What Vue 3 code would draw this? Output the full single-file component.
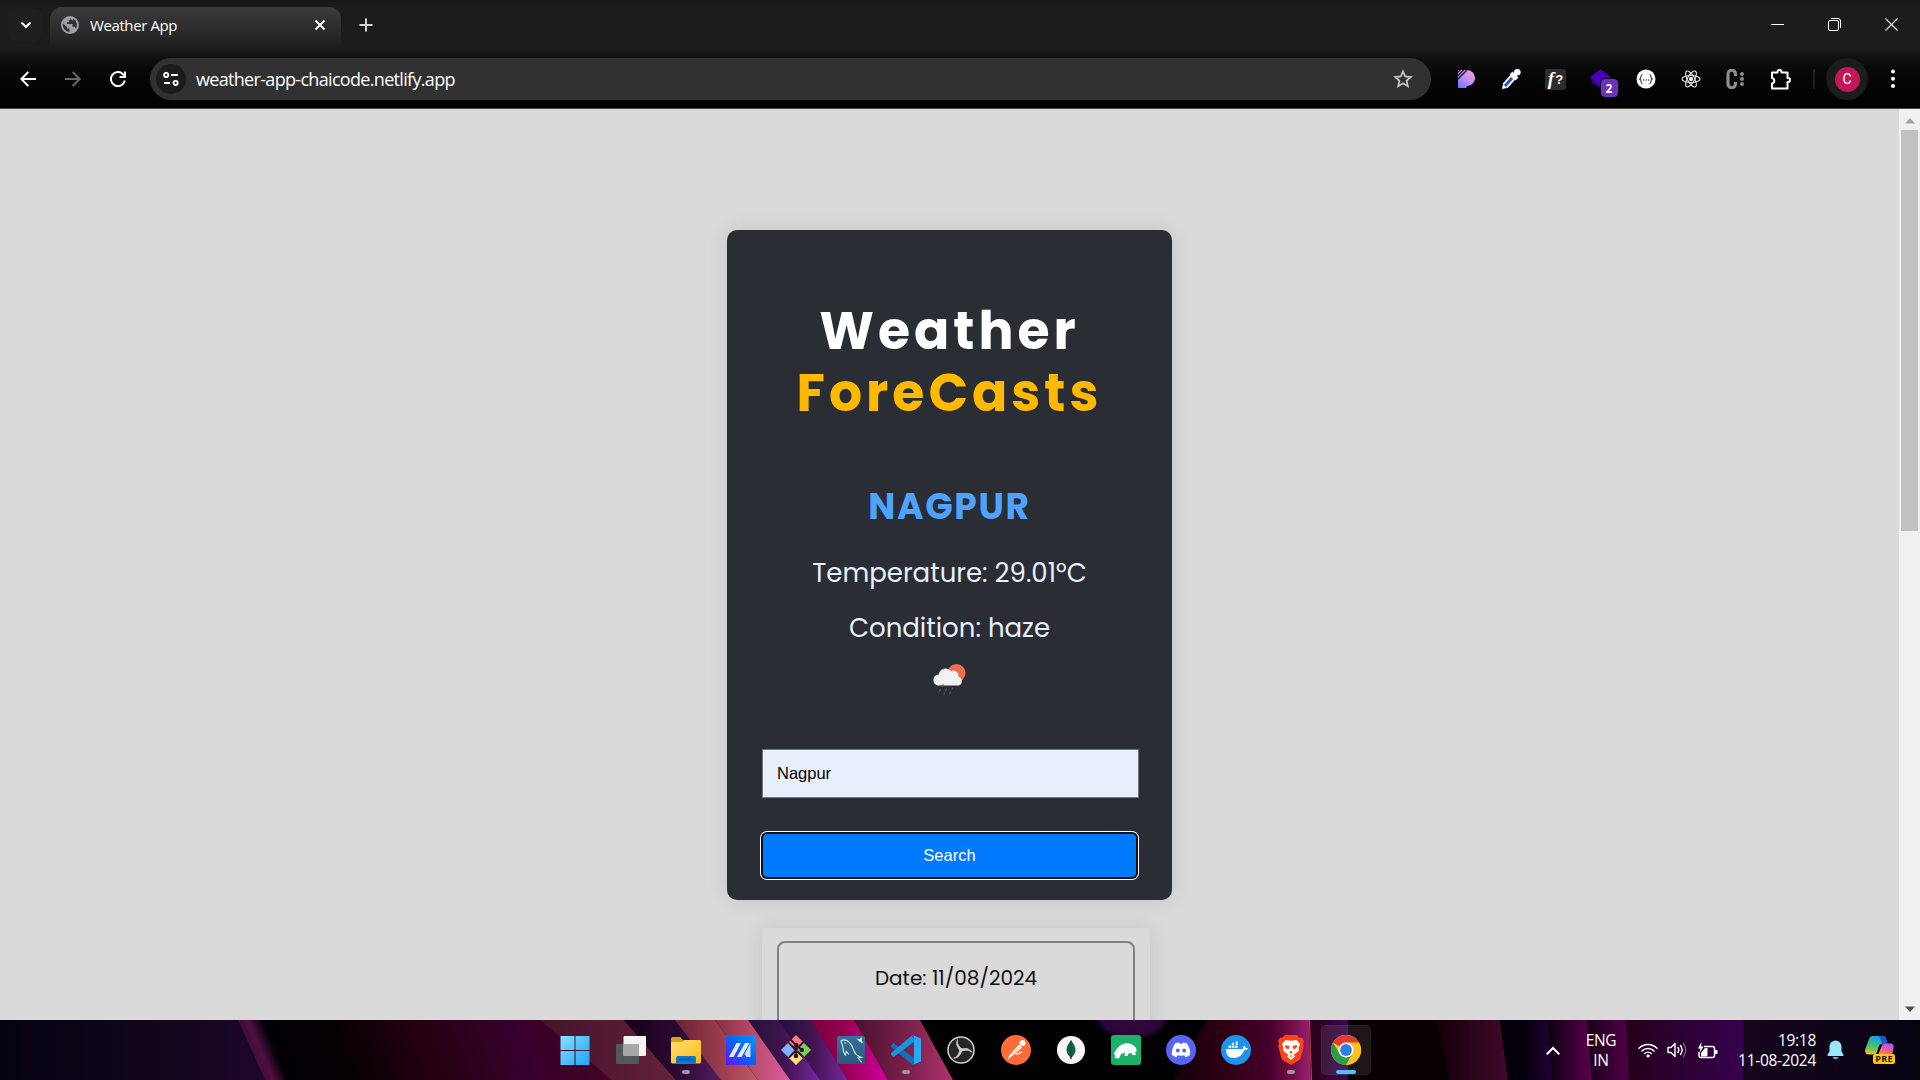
<script setup>
const extensions = ['pixel', 'picker', 'fonts', 'stack', 'json', 'react', 'cdots', 'puzzle']
const apps = [
  { id: 'windows' }, { id: 'taskview' }, { id: 'explorer', open: true }, { id: 'asus' }, { id: 'git' },
  { id: 'mysql' }, { id: 'vscode', open: true }, { id: 'obs' }, { id: 'postman' }, { id: 'mongo' },
  { id: 'bear' }, { id: 'discord' }, { id: 'docker' }, { id: 'brave', open: true }, { id: 'chrome', active: true },
]
</script>

<template>
  <div class="screen">
    <header class="browser">
      <div class="tabstrip">
        <div class="tabsearch">
          <svg width="12" height="8" viewBox="0 0 12 8"><path d="M1.500 1.500 6 6l4.500-4.500" fill="none" stroke="#fff" stroke-width="2.200" /></svg>
        </div>
        <div class="tab">
          <svg class="globe" width="18" height="18" viewBox="0 0 18 18">
            <circle cx="9" cy="9" r="9" fill="#9aa0a6" />
            <path d="M2 7.500 6 11v1.500h2.500V16A7.200 7.200 0 0 1 2 7.500zM9.500 2v1.500L8 4.500v1.800H6V8h5.500v2.800h2l1.300 1.800A7.200 7.200 0 0 0 12 2.400v1.800h-1.200z" fill="#303134" />
          </svg>
          <span class="tab-title">Weather App</span>
          <svg class="tab-close" width="12" height="12" viewBox="0 0 12 12"><path d="m1.500 1.500 9 9m0-9-9 9" stroke="#fff" stroke-width="1.800" /></svg>
        </div>
        <svg class="plus" width="14" height="14" viewBox="0 0 14 14"><path d="M7 .5v13M.5 7h13" stroke="#d6d6d6" stroke-width="2" /></svg>
        <div class="winbtns">
          <svg width="13" height="13" viewBox="0 0 13 13"><path d="M0 6.500h13" stroke="#fff" /></svg>
          <svg width="13" height="13" viewBox="0 0 13 13" fill="none" stroke="#fff"><rect x=".5" y="2.500" width="10" height="10" rx="1.500" /><path d="M3 .5h7a2.500 2.500 0 0 1 2.500 2.500v7" /></svg>
          <svg width="13" height="13" viewBox="0 0 13 13"><path d="m.5.500 12 12m0-12-12 12" stroke="#eee" stroke-width="1.100" /></svg>
        </div>
      </div>
      <div class="toolbar">
        <div class="nav">
          <svg width="16" height="16" viewBox="0 0 16 16" fill="none" stroke="#fff" stroke-width="2"><path d="M16 8H1.500M8.300 1 1.300 8l7 7" /></svg>
          <svg width="16" height="16" viewBox="0 0 16 16" fill="none" stroke="#6b6b6b" stroke-width="2"><path d="M0 8h14.500M7.700 1l7 7-7 7" /></svg>
          <svg width="16" height="16" viewBox="0 0 16 16" fill="none" stroke="#fff" stroke-width="2"><path d="M14.800 9.500A7 7 0 1 1 13 3.200l1.500 1.800" /><path d="M15 .5V6H9.500" /></svg>
        </div>
        <div class="omnibox">
          <span class="siteinfo">
            <svg width="16" height="14" viewBox="0 0 16 14" fill="none" stroke="#fff" stroke-width="1.900"><circle cx="3.200" cy="3" r="2.100" /><path d="M8 3h7M1 11h6" /><circle cx="12.600" cy="11" r="2.100" /></svg>
          </span>
          <span class="url">weather-app-chaicode.netlify.app</span>
          <svg class="star" width="20" height="20" viewBox="0 0 20 20"><path d="m10 2.300 2.200 5.200 5.600.5-4.200 3.700 1.200 5.500-4.800-2.900-4.800 2.900 1.200-5.500L2.200 8l5.600-.5z" fill="none" stroke="#c4c4c4" stroke-width="1.800" /></svg>
        </div>
        <div class="exts">
          <span v-for="e in extensions" :key="e" class="ext">
            <svg v-if="e === 'pixel'" width="18" height="20" viewBox="0 0 18 20">
              <defs><linearGradient id="pg" x1=".9" y1="0" x2=".1" y2="1"><stop offset="0" stop-color="#ff9ccb" /><stop offset=".5" stop-color="#c48df8" /><stop offset="1" stop-color="#6d74ff" /></linearGradient></defs>
              <path d="M1 1h8.500a8 8 0 0 1 1 16H9.500v2H1z" fill="url(#pg)" /><path d="M0 4 4 0M0 7.500 7.500 0M1 10 10 1" stroke="#080808" stroke-width="1.100" />
            </svg>
            <svg v-else-if="e === 'picker'" width="20" height="22" viewBox="0 0 20 22">
              <path d="M4 18 13 8" stroke="#fff" stroke-width="6.500" /><path d="m1 21 1-5 4 4z" fill="#fff" /><path d="m4 18 7-8" stroke="#2f53c7" stroke-width="3" />
              <path d="m10 5 6 6M13 8l3-3.500" stroke="#fff" stroke-width="4" /><circle cx="16.300" cy="4.200" r="3.300" fill="#fff" />
            </svg>
            <span v-else-if="e === 'fonts'" class="fbox"><i>f</i>?</span>
            <span v-else-if="e === 'stack'" class="stack">
              <svg width="22" height="20" viewBox="0 0 22 20"><path d="M0 13 10 6l11 7-10 7z" fill="#2a0673" /><path d="M0 8.500 10.500 0 21 8.500 10.500 17z" fill="#4b00b5" /></svg>
              <b class="badge">2</b>
            </span>
            <svg v-else-if="e === 'json'" width="20" height="20" viewBox="0 0 20 20"><circle cx="10" cy="10" r="9.500" fill="#fff" /><path d="M6.500 5.500C4 5.500 6 9 3.800 10 6 11 4 14.500 6.500 14.500M13.500 5.500C16 5.500 14 9 16.200 10 14 11 16 14.500 13.500 14.500" fill="none" stroke="#333" stroke-width="1.100" /><path d="M7 11h1.200M9.500 11h1.200M12 11h1.200" stroke="#555" stroke-width="1.300" /></svg>
            <svg v-else-if="e === 'react'" width="20" height="20" viewBox="0 0 20 20" fill="none" stroke="#dedede" stroke-width="1.200"><ellipse cx="10" cy="10" rx="9" ry="3.500" /><ellipse cx="10" cy="10" rx="9" ry="3.500" transform="rotate(60 10 10)" /><ellipse cx="10" cy="10" rx="9" ry="3.500" transform="rotate(120 10 10)" /><circle cx="10" cy="10" r="1.600" fill="#fff" /></svg>
            <svg v-else-if="e === 'cdots'" width="19" height="20" viewBox="0 0 19 20"><path d="M9.500 7V5a3.700 3.700 0 0 0-7.500 0v10a3.700 3.700 0 0 0 7.500 0V13" fill="none" stroke="#8d8d8d" stroke-width="3.200" /><g fill="#8d8d8d"><circle cx="16" cy="5" r="2" /><circle cx="16" cy="10" r="2" /><circle cx="16" cy="15" r="2" /></g></svg>
            <svg v-else width="21" height="21" viewBox="0 0 21 21"><path d="M2 3.500h5.500V3a2 2 0 0 1 4 0v.5H17.500V9h.5a2 2 0 0 1 0 4h-.5v6.500H2v-5a2.800 2.800 0 0 0 0-5.500z" fill="none" stroke="#fff" stroke-width="2" stroke-linejoin="round" /></svg>
          </span>
        </div>
        <span class="divider"></span>
        <span class="avatar-ring"><span class="avatar">C</span></span>
        <svg class="kebab" width="6" height="20" viewBox="0 0 6 20" fill="#fff"><circle cx="3" cy="2.500" r="2" /><circle cx="3" cy="9.700" r="2" /><circle cx="3" cy="17" r="2" /></svg>
      </div>
    </header>

    <main class="viewport">
      <div class="page">
        <section class="card">
          <h1><span class="l1">Weather</span><span class="l2">ForeCasts</span></h1>
          <h2>NAGPUR</h2>
          <p class="temp">Temperature: 29.01°C</p>
          <p class="cond">Condition: haze</p>
          <svg class="wicon" width="34" height="34" viewBox="0 0 34 34">
            <circle cx="24.500" cy="10" r="9" fill="#ec6e4c" />
            <path d="M6 22.500a5.600 5.600 0 0 1 .8-11.100 6.800 6.800 0 0 1 12.200-3.100A5 5 0 0 1 26.300 13.800a4.600 4.600 0 0 1 .7 8.700z" fill="#f2f2f2" />
            <g stroke="#54565b" stroke-width="1.500" stroke-linecap="round"><path d="m11 22-.5 1.200M8.500 26.500l-.8 1.500M14.500 26l-.8 1.500M20.500 25l-.5 1M12.500 30l-.5 1M18.500 29l-1 2" /></g>
          </svg>
          <div class="field">Nagpur</div>
          <button class="search">Search</button>
        </section>
        <section class="forecast">
          <div class="day">Date: 11/08/2024</div>
        </section>
      </div>
      <div class="scrollbar">
        <svg width="10" height="6" viewBox="0 0 10 6"><path d="M0 5.500 5 0l5 5.500z" fill="#a3a3a3" /></svg>
        <span class="thumb"></span>
        <svg class="down" width="10" height="6" viewBox="0 0 10 6"><path d="M0 .5 5 6l5-5.500z" fill="#505050" /></svg>
      </div>
    </main>

    <footer class="taskbar">
      <svg class="wall" width="1920" height="60" viewBox="0 0 1920 60">
        <defs>
          <linearGradient id="w0"><stop offset="0" stop-color="#05030f" /><stop offset="1" stop-color="#1c0828" /></linearGradient>
          <linearGradient id="w1" gradientUnits="userSpaceOnUse" x1="238" x2="266" y1="12" y2="0"><stop offset="0" stop-color="#3a0a2c" /><stop offset=".45" stop-color="#4f1040" /><stop offset=".9" stop-color="#010006" /></linearGradient>
          <linearGradient id="w2" gradientUnits="userSpaceOnUse" x1="262" x2="575" y1="0" y2="-120"><stop offset="0" stop-color="#010006" /><stop offset=".2" stop-color="#080005" /><stop offset=".45" stop-color="#280012" /><stop offset=".68" stop-color="#36002c" /><stop offset=".88" stop-color="#420024" /><stop offset="1" stop-color="#96006c" /></linearGradient>
          <linearGradient id="w3"><stop offset="0" stop-color="#42142a" /><stop offset="1" stop-color="#65203a" /></linearGradient>
          <linearGradient id="w4"><stop offset="0" stop-color="#190018" /><stop offset=".5" stop-color="#280a30" /><stop offset="1" stop-color="#602070" /></linearGradient>
          <linearGradient id="w5"><stop offset="0" stop-color="#6c2038" /><stop offset=".5" stop-color="#96394b" /><stop offset="1" stop-color="#c05a66" /></linearGradient>
          <linearGradient id="w6"><stop offset="0" stop-color="#843040" /><stop offset=".5" stop-color="#b84c68" /><stop offset="1" stop-color="#df5ca8" /></linearGradient>
          <linearGradient id="w7"><stop offset="0" stop-color="#25103a" /><stop offset=".5" stop-color="#401450" /><stop offset="1" stop-color="#7828a0" /></linearGradient>
          <linearGradient id="w8"><stop offset="0" stop-color="#74003c" /><stop offset=".45" stop-color="#970050" /><stop offset="1" stop-color="#d000a0" /></linearGradient>
          <linearGradient id="w9"><stop offset="0" stop-color="#48122c" /><stop offset=".55" stop-color="#7b1f4c" /><stop offset="1" stop-color="#b0346c" /></linearGradient>
          <linearGradient id="w10"><stop offset="0" stop-color="#140008" /><stop offset=".4" stop-color="#300015" /><stop offset=".7" stop-color="#46002c" /><stop offset=".88" stop-color="#76104a" /><stop offset="1" stop-color="#9c2074" /></linearGradient>
          <linearGradient id="w11"><stop offset="0" stop-color="#280018" /><stop offset="1" stop-color="#3c0850" /></linearGradient>
          <linearGradient id="w12"><stop offset="0" stop-color="#150008" /><stop offset="1" stop-color="#40082a" /></linearGradient>
          <linearGradient id="w13"><stop offset="0" stop-color="#010006" /><stop offset=".45" stop-color="#05000c" /><stop offset="1" stop-color="#220038" /></linearGradient>
          <linearGradient id="w14"><stop offset="0" stop-color="#0c0010" /><stop offset="1" stop-color="#58004c" /></linearGradient>
          <linearGradient id="w15"><stop offset="0" stop-color="#1c0018" /><stop offset="1" stop-color="#500048" /></linearGradient>
          <linearGradient id="w16"><stop offset="0" stop-color="#25001c" /><stop offset="1" stop-color="#36004c" /></linearGradient>
          <linearGradient id="w17"><stop offset="0" stop-color="#16061f" /><stop offset="1" stop-color="#06030f" /></linearGradient>
          <radialGradient id="w18"><stop offset="0" stop-color="#34093e" /><stop offset=".8" stop-color="#2a0638" /><stop offset="1" stop-color="#2a063800" /></radialGradient>
        </defs>
        <rect width="1920" height="60" fill="#010003" />
        <path d="M0 0h238l28 60H0z" fill="url(#w0)" />
        <path d="M260 0h280l75 60H285z" fill="url(#w2)" />
        <path d="M238 0h24l28 60h-25z" fill="url(#w1)" />
        <path d="M540 0h84l52 60h-64z" fill="url(#w3)" />
        <path d="M624 0h56l50 60h-54z" fill="url(#w4)" />
        <path d="M675 0h40l43 60h-37z" fill="url(#w5)" />
        <path d="M715 0h34l42 60h-33z" fill="url(#w6)" />
        <path d="M748 0h32l42 60h-32z" fill="url(#w7)" />
        <path d="M778 0h34l36 60h-28z" fill="url(#w7)" />
        <path d="M810 0h45l33 60h-40z" fill="url(#w8)" />
        <path d="M854 0h66l33 60h-65z" fill="url(#w9)" />
        <ellipse cx="1132" cy="-2" rx="38" ry="22" fill="url(#w18)" />
        <path d="M1207 0h102l2 60h-138z" fill="url(#w10)" />
        <path d="M1309 0h39v60h-37z" fill="url(#w11)" />
        <path d="m1309.500 0 2 60" stroke="#a03c30" stroke-width="1.300" />
        <path d="M1348 0h88l14 60h-102z" fill="#090004" />
        <path d="M1436 0h64l8 60h-58z" fill="url(#w12)" />
        <path d="M1500 0h47l5 60h-44z" fill="url(#w13)" />
        <path d="M1547 0h40l5 60h-40z" fill="url(#w14)" />
        <path d="M1587 0h39l3 60h-37z" fill="url(#w15)" />
        <path d="M1626 0h117v60h-114z" fill="url(#w16)" />
        <path d="M1743 0h177v60h-177z" fill="url(#w17)" />
      </svg>

      <div class="apps">
        <span v-for="a in apps" :key="a.id" class="app" :class="[a.id, { open: a.open, active: a.active }]">
          <svg width="30" height="30" viewBox="0 0 30 30">
            <defs v-if="a.id === 'windows'">
              <linearGradient id="wn" x1="0" y1="0" x2="1" y2="1"><stop offset="0" stop-color="#83e2fd" /><stop offset="1" stop-color="#1fa4f5" /></linearGradient>
              <linearGradient id="fold" x1="0" y1="0" x2="1" y2="1"><stop offset="0" stop-color="#ffdf6e" /><stop offset="1" stop-color="#fbb919" /></linearGradient>
              <linearGradient id="as" x1="1" y1="0" x2="0" y2="1"><stop offset="0" stop-color="#0098ff" /><stop offset=".5" stop-color="#0b63f5" /><stop offset="1" stop-color="#6a10ff" /></linearGradient>
              <linearGradient id="my" x1="0" y1="0" x2="0" y2="1"><stop offset="0" stop-color="#36719b" /><stop offset="1" stop-color="#285a7c" /></linearGradient>
            </defs>
            <path v-if="a.id === 'windows'" fill="url(#wn)" d="M.5 1h14v14H.500zM15.500 1h14v14h-14zM.5 16h14v14H.500zM15.500 16h14v14h-14z" />
            <g v-else-if="a.id === 'taskview'"><rect x="0" y="9" width="23" height="20" rx="1" fill="#55585a" /><rect x="7.500" y="1" width="22.500" height="20" rx="1" fill="#f3f3f3" /><path d="M7.500 9H23v12H7.500z" fill="#a5a7a8" /></g>
            <g v-else-if="a.id === 'explorer'"><path d="M0 3.500Q0 2 1.500 2H9l3 3h16q2 0 2 2v6H0z" fill="#e2a10b" /><path d="M0 8q0-1 1-1h10l3-2h14.500Q30 5 30 6.500V27q0 1.500-1.500 1.500h-27Q0 28.500 0 27z" fill="url(#fold)" /><path d="M5 28.500V23q0-2 2-2h16q2 0 2 2v5.500z" fill="#0b78cf" /><path d="M9 24.500h12" stroke="#084f94" stroke-width="1.500" stroke-linecap="round" /></g>
            <g v-else-if="a.id === 'asus'"><rect width="30" height="30" fill="url(#as)" /><path d="M3 22 10.500 8H15L7.500 22zM11 22l8-14h4.500l-8 14z" fill="#e5ebff" /><path d="M18.500 19 24.500 8v14h-4z" fill="#d6defc" /></g>
            <g v-else-if="a.id === 'git'">
              <path d="m15 0 7 7-4 4-3 2-7.500-5.500z" fill="#ff7b82" /><path d="m22.500 7.500 7.500 7.500-7.500 7.500-6-7.500z" fill="#7bd05b" /><path d="m7.500 7.500 6.500 7-6.500 8L0 15z" fill="#82b3ff" /><path d="m15 17 7 6-7 7-7-7z" fill="#ffe27a" />
              <path d="m9 4 6 6v11M15 10l6 5M7 7l7 7.500M8 22.500l6-6M22.500 7 18 11.500M22.500 22.500 17 17" stroke="#321528" stroke-width="1.800" fill="none" /><circle cx="15" cy="10" r="2.300" fill="#321528" /><circle cx="15" cy="21" r="2.300" fill="#321528" /><circle cx="20.800" cy="15" r="2.300" fill="#321528" />
            </g>
            <g v-else-if="a.id === 'mysql'"><rect x="1" y="1" width="28" height="28" rx="2" fill="url(#my)" /><path d="M5 5.500c6-2.500 10.500 3 12.500 9 1 3.500 3 5.500 5 6.500l3 1.500-3.500.5 4 4.500M5 5.500c0 3 2 4 2 7.500 0 3.500.8 5.500 2.500 7l.8-3.500 2.700 3" fill="none" stroke="#d9ecf5" stroke-width="1.100" /><path d="m20.500 3.500 3 .8L25.500 2l.5 4 1.500 2.500-3.500-1.500z" fill="#e7f3fa" /><circle cx="9" cy="8" r=".7" fill="#fff" /></g>
            <g v-else-if="a.id === 'vscode'"><path d="M0 10.500 2.500 8 23 23l-1 7L0 12z" fill="#1071b8" /><path d="M0 19.500 2.500 22 23 7 21.500 0 0 18z" fill="#1c93e0" /><path d="M21.500 0 30 3.500v23L21.500 30q1.500-.5 1.500-2.500v-25q0-2-1.500-2.500z" fill="#2aa8f4" /></g>
            <g v-else-if="a.id === 'obs'"><circle cx="15" cy="15" r="13" fill="#26262a" stroke="#d0d0d0" stroke-width="1.500" /><path v-for="r in [0, 120, 240]" :key="r" :transform="`rotate(${r} 15 15)`" d="M15 15.500c.5-4-4.500-4.500-3.500-11-2.800 6 1.500 8.200 2.200 11.500z" fill="#cfcfcf" stroke="#cfcfcf" stroke-width=".7" /></g>
            <g v-else-if="a.id === 'postman'"><circle cx="15" cy="15" r="15" fill="#ff6c37" /><circle cx="21.500" cy="8" r="3" fill="#fff" /><path d="m7 23.500 3-4.500 8-9 2.500 2.500L12 20z" fill="#fff" stroke="#fff" /><path d="m13 17 3 2 5-2" stroke="#fff" fill="none" stroke-width="1.300" /><path d="m11 20 8-8.500" stroke="#ff9c76" /></g>
            <g v-else-if="a.id === 'mongo'"><circle cx="15" cy="15" r="14" fill="#f7f7f7" /><path d="M15 5.500c6 7 6 12 0 17.500-6-5.500-6-10.500 0-17.500z" fill="#116149" /><path d="M15 5.500V24" stroke="#0b4b38" stroke-width="1.300" /></g>
            <g v-else-if="a.id === 'bear'"><rect width="30" height="30" rx="3" fill="#1bb267" /><path d="M4 20C2 19 4 16 6 14c3-6 13-8 17-3 2 1 3 4 2.500 5.500l-1.500.5 1 3h-3.500l-1-2-3 .5-1 2.500h-3l.5-3.500-4 1.500-2 4.500-4-.5z" fill="#fff" /></g>
            <g v-else-if="a.id === 'discord'"><circle cx="15" cy="15" r="15" fill="#5865f2" /><path d="M9 8.500q2-1 4-1l.7 1.300h2.600L17 7.500q2 0 4 1 4 6 3 11.500-2 1.600-4.500 2.300l-1.200-2q-3.300.8-6.600 0l-1.200 2Q8 21.600 6 20 5 14.500 9 8.500z" fill="#fff" /><ellipse cx="11.800" cy="15.500" rx="1.900" ry="2.100" fill="#5865f2" /><ellipse cx="18.200" cy="15.500" rx="1.900" ry="2.100" fill="#5865f2" /></g>
            <g v-else-if="a.id === 'docker'"><circle cx="15" cy="15" r="15" fill="#1d93ec" /><path d="M5 14h17q0-2 1-3.500 1.500 1 1.700 2.500 1.500-.3 2.500.3-1 2-4 2-3 7.700-10.500 7.700-8 0-7.700-9z" fill="#fff" /><path d="M7.500 10.500h2.700V13H7.500zM10.800 10.500h2.700V13h-2.700zM14.100 10.500h2.700V13h-2.700zM10.800 7.800h2.200V10h-2.200z" fill="#fff" opacity=".85" /><path d="M14.800 6.500h1.800V10h-1.800z" fill="#fff" /></g>
            <g v-else-if="a.id === 'brave'"><path d="M9 0h12l2.500 2.800 2.300-.3L28 6l-1 2.500.8 2.500-3.300 12.500Q24 25 15 30 6 25 5.500 23.500L2.200 11 3 8.500 2 6l2.200-3.500 2.300.3z" fill="#fb4413" /><path d="m9.500 5 5.500.8L20.500 5 24 9l-1.500 4 .5 2.500-3.500 3-2 1 1.500 2-4 3.500-4-3.500 1.500-2-2-1-3.500-3L7.500 13 6 9z" fill="#fff" /><path d="m9 10 4.500 1-1 3.500L9.500 13zM21 10l-4.500 1 1 3.500 3-1.500zM13 17l2-1 2 1-2 1.500zM13.500 21l1.500 1 1.500-1-1.500-.8z" fill="#fb4413" /></g>
            <g v-else><circle cx="15" cy="15" r="15" fill="#fbc116" /><path d="M2 7.500A15 15 0 0 1 28 7.500L15 15z" fill="#e33b2e" /><path d="M2 7.500A15 15 0 0 0 15 30l6.500-11.300L8.500 18.800z" fill="#2a9c4b" /><path d="M28 7.500H15l6.500 11.300L15 30A15 15 0 0 0 28 7.500z" fill="#fbc116" /><circle cx="15" cy="15" r="7.500" fill="#fff" /><circle cx="15" cy="15" r="5.900" fill="#2f7de9" /></g>
          </svg>
        </span>
      </div>

      <div class="tray">
        <span class="up"><svg width="14" height="9" viewBox="0 0 14 9"><path d="m1.300 7.700 5.700-5.700 5.700 5.700" fill="none" stroke="#fff" stroke-width="2" stroke-linecap="round" /></svg></span>
        <span class="lang"><span>ENG</span><span>IN</span></span>
        <span class="wifi"><svg width="20" height="16" viewBox="0 0 20 16" fill="none" stroke="#fff" stroke-width="1.500" stroke-linecap="round"><path d="M1 6.200a12.700 12.700 0 0 1 18 0M3.900 9a8.600 8.600 0 0 1 12.200 0M6.600 11.500a4.900 4.900 0 0 1 6.800 0" /><circle cx="10" cy="14" r="1.300" fill="#fff" stroke-width=".6" /></svg></span>
        <span class="sound"><svg width="20" height="16" viewBox="0 0 20 16" fill="none" stroke="#fff" stroke-width="1.400" stroke-linecap="round" stroke-linejoin="round"><path d="M1 5.500h3l4-4v13l-4-4H1zM11 5.500q1.700 2.500 0 5M13.500 3.500q3.300 4.500 0 9" /><path d="M16.500 1.500q4.500 6.500 0 13" stroke="#716178" /></svg></span>
        <span class="power"><svg width="21" height="17" viewBox="0 0 21 17"><path d="M7 4.500h8.500q2 0 2 2v7q0 2-2 2H4q-2 0-2-2V10" fill="none" stroke="#fff" stroke-width="1.500" /><path d="M18 8h2.500v4H18z" fill="#fff" /><path d="M4 14.500V11l4-5h2.500v7.500l-1 1z" fill="#fff" /><path d="M4.500 0 1 6.500h2.300L2.500 11 6.500 4.500H4.200z" fill="#fff" /></svg></span>
        <span class="clock"><span class="time">19:18</span><span class="date">11-08-2024</span></span>
        <span class="bell"><svg width="17" height="20" viewBox="0 0 17 20" fill="#98e7fd"><path d="M8.500.5A6 6 0 0 0 2.500 6.500v5L.5 14.800Q.3 16 1.300 16h14.400q1 0 .8-1.200l-2-3.300v-5A6 6 0 0 0 8.500.500z" /><path d="M5.500 17h6q-.7 2.300-3 2.300t-3-2.300z" fill="#4ab8e2" /></svg></span>
        <span class="copilot">
          <svg width="30" height="28" viewBox="0 0 30 28">
            <defs>
              <linearGradient id="ca" x1=".5" y1="0" x2=".2" y2="1"><stop offset="0" stop-color="#189eea" /><stop offset=".5" stop-color="#3dbb82" /><stop offset="1" stop-color="#e7c91c" /></linearGradient>
              <linearGradient id="cb" x1=".8" y1="0" x2=".3" y2="1"><stop offset="0" stop-color="#a558f0" /><stop offset=".5" stop-color="#ee58a0" /><stop offset="1" stop-color="#ff8a50" /></linearGradient>
            </defs>
            <path d="M8 0h10q2.500 0 3 3l1.500 5h-6q-2 0-2.500 2l-2 6q-.8 2.500-3 2.500H4q-5 0-3.500-6L4 3Q5 0 8 0z" fill="url(#ca)" /><path d="M14 0h4q2.500 0 3 3l1.500 5h-5z" fill="#1d55d8" /><path d="M20 7.500h5.500q4 0 3 5L27 20H12.500l4-9.500q1-3 3.500-3z" fill="url(#cb)" />
          </svg>
          <b class="pre">PRE</b>
        </span>
      </div>
    </footer>
  </div>
</template>

<style>
html, body { margin: 0; overflow: hidden; background: #000; }
</style>

<style scoped>
.screen { width: 1920px; height: 1080px; display: flex; flex-direction: column; overflow: hidden; font-family: "Open Sans", "Noto Sans", sans-serif; }
svg { display: block; flex: none; }
.browser { height: 108px; flex: none; border-bottom: 1px solid #4c4646; background: linear-gradient(#171717 0, #1c1c1c 10px, #1c1c1c 49px, #121212 56px, #070707 72px, #020202 100px); }
.tabstrip { height: 50px; display: flex; align-items: flex-start; }
.tabsearch { width: 35px; height: 34px; margin: 8px 0 0 8px; border-radius: 11px; background: #1f1f1f; display: flex; align-items: center; justify-content: center; }
.tab { width: 291px; height: 43px; margin: 7px 0 0 7px; border-radius: 12px 12px 0 0; background: linear-gradient(#3b3b3b, #303030 40%, #1b1b1b); box-sizing: border-box; padding: 0 15px 7px 11px; display: flex; align-items: center; }
.tab-title { margin-left: 11px; color: #fff; font-size: 15px; letter-spacing: -.4px; flex: 1; white-space: nowrap; }
.plus { margin: 18px 0 0 17.500px; }
.winbtns { margin-left: auto; display: flex; gap: 44px; padding: 18px 22.500px 0 0; }
.toolbar { height: 58px; display: flex; align-items: center; }
.nav { display: flex; gap: 29px; width: 130.500px; padding-left: 19.500px; flex: none; }
.omnibox { width: 1281px; height: 42px; border-radius: 21px; background: #313131; display: flex; align-items: center; box-sizing: border-box; padding: 0 18.500px 0 6px; flex: none; }
.siteinfo { width: 30px; height: 30px; border-radius: 50%; background: #1c1c1c; display: flex; align-items: center; justify-content: center; }
.url { flex: 1; margin-left: 10px; color: #fff; font-size: 18px; letter-spacing: -.68px; white-space: nowrap; }
.exts { display: flex; margin-left: 12px; }
.ext { width: 45px; height: 30px; display: flex; align-items: center; justify-content: center; }
.fbox { width: 21px; height: 21px; border-radius: 3px; background: #2d2d2d; color: #fff; display: flex; align-items: center; justify-content: center; font: bold 13px "Liberation Sans", sans-serif; }
.fbox i { font: italic bold 19px "Liberation Serif", serif; margin-right: 1px; }
.stack { position: relative; }
.badge { position: absolute; left: 11px; top: 10px; width: 17px; height: 18px; border-radius: 4px; background: #6a35b8; outline: 1px solid #12041f; color: #fff; font-size: 12px; line-height: 19px; text-align: center; }
.divider { width: 2px; height: 20px; background: #1f1f1f; margin-left: 10px; }
.avatar-ring { width: 42px; height: 42px; border-radius: 50%; background: #1c1c1c; margin-left: 11px; display: flex; align-items: center; justify-content: center; }
.avatar { width: 25px; height: 25px; border-radius: 50%; background: #c2185b; color: #fff; font: 14px/25px Roboto, sans-serif; text-align: center; }
.kebab { margin-left: 21.500px; }

.viewport { height: 911px; flex: none; display: flex; background: #dadada; overflow: hidden; font-family: Poppins, Inter, sans-serif; }
.page { flex: 1; height: 911px; overflow: hidden; }
.card { width: 445px; height: 670px; margin: 121px 0 0 727px; border-radius: 10px; background: #2b2d35; box-shadow: 0 0 20px rgba(0, 0, 0, .1); box-sizing: border-box; padding-top: 70px; display: flex; flex-direction: column; align-items: center; }
h1 { margin: 0; display: flex; flex-direction: column; align-items: center; font-size: 52px; line-height: 62px; font-weight: 700; color: #fff; }
.l1 { letter-spacing: 4px; }
.l2 { letter-spacing: 4px; color: #ffb900; }
h2 { margin: 58px 0 0; color: #4da3ff; font-size: 36px; line-height: 50px; font-weight: 700; letter-spacing: 1.700px; }
p { margin: 0; color: #e6f1ff; font-size: 26px; line-height: 40px; white-space: nowrap; }
.temp { margin-top: 21px; }
.cond { margin-top: 15px; }
.wicon { margin: 15px 0 0 -1px; }
.field { width: 377px; height: 49px; margin: 52px 0 0 2px; box-sizing: border-box; border: 1px solid #767676; background: #e8f0fe; color: #000; font: 16.500px/47px "Liberation Sans", Arial, sans-serif; padding-left: 14px; }
.search { width: 375px; height: 45px; margin-top: 35px; padding: 0; border: 1px solid #101010; border-radius: 5px; background: #007bff; color: #fff; font: 16.500px "Liberation Sans", Arial, sans-serif; box-shadow: 0 0 0 1px #101010, 0 0 0 2px #fff; }
.forecast { width: 388px; height: 300px; margin: 28px 0 0 762px; box-sizing: border-box; padding: 13px 15px; background: #dadada; box-shadow: 0 0 20px rgba(0, 0, 0, .1); }
.day { height: 280px; border: 2px solid #808080; border-radius: 8px; text-align: center; color: #111; font-size: 20px; line-height: 70px; box-sizing: border-box; }
.scrollbar { width: 21px; background: #f0f0f0; display: flex; flex-direction: column; align-items: center; padding-top: 9px; box-sizing: border-box; }
.thumb { width: 17px; height: 401px; margin-top: 6px; background: #c1c1c1; }
.down { margin: auto 0 8px; }

.taskbar { height: 60px; position: relative; display: flex; color: #fff; }
.wall { position: absolute; left: 0; top: 0; }
.apps { position: relative; display: flex; margin-left: 548px; align-items: center; }
.app { position: relative; width: 55px; height: 60px; display: flex; align-items: center; justify-content: center; }
.app.windows { box-sizing: border-box; padding-right: 2px; }
.app.open::after, .app.active::after { content: ""; position: absolute; bottom: 6px; left: 24px; width: 8px; height: 4px; border-radius: 2px; background: #a392a2; }
.app.active::before { content: ""; position: absolute; left: 3px; top: 5px; width: 48px; height: 48px; border: 1px solid #ffffff0c; border-radius: 5px; background: #ffffff16; }
.app.active svg { position: relative; }
.app.active::after { left: 18px; width: 20px; background: #4cc2ff; }
.tray { position: relative; margin-left: auto; display: flex; align-items: center; padding-right: 20px; }
.tray > span { display: flex; align-items: center; justify-content: center; }
.up { width: 40px; }
.tray .lang, .tray .clock { flex-direction: column; font-size: 15.500px; line-height: 20px; letter-spacing: -.3px; }
.tray .clock { width: 92px; align-items: flex-end; padding-bottom: 1px; }
.lang { width: 56px; }
.wifi { width: 30px; margin-left: 4px; }
.sound { width: 28px; }
.power { width: 33px; }
.bell { width: 30px; margin-left: 4px; }
.copilot { width: 40px; margin-left: 10px; position: relative; }
.pre { position: absolute; left: 13px; top: 18px; width: 22px; height: 10px; border-radius: 2px; background: #fcc50c; color: #241a00; font-size: 9px; line-height: 10px; text-align: center; letter-spacing: .3px; }
</style>
